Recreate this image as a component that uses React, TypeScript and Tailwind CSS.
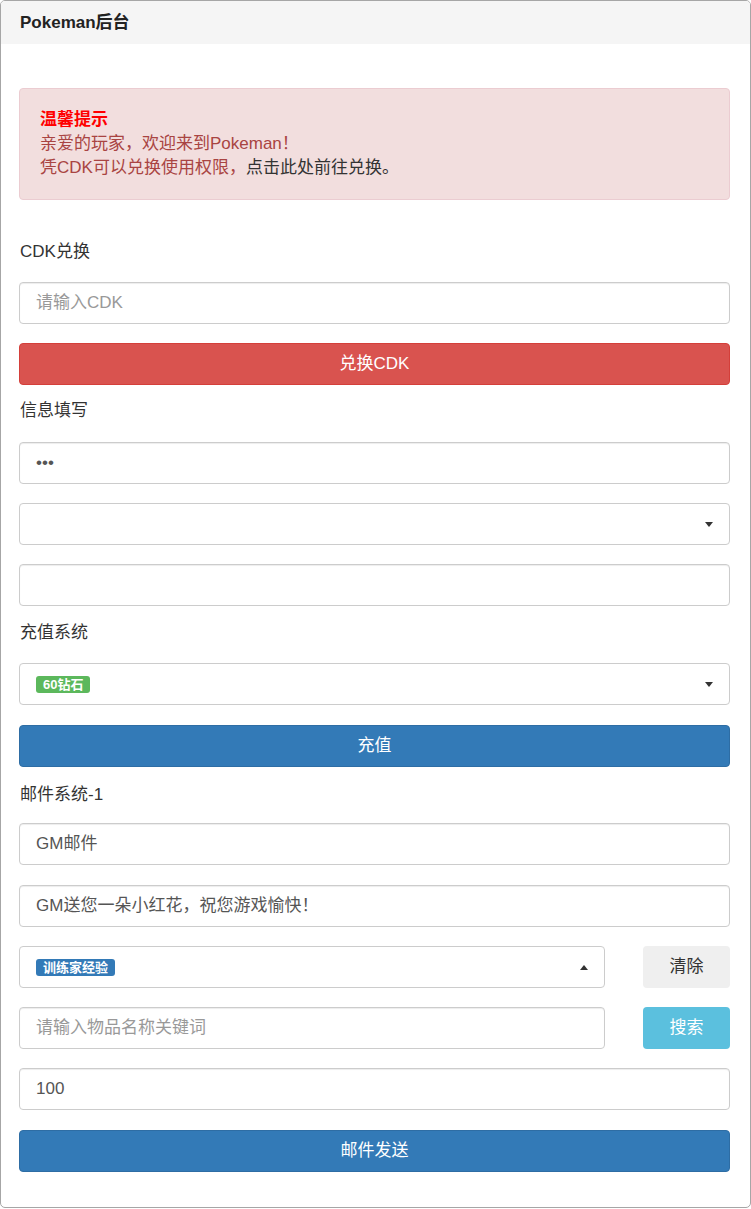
import React from "react";

const font = { fontFamily: '"Liberation Sans", "Noto Sans CJK SC", sans-serif' };

function Caret({ up = false }: { up?: boolean }) {
  return up ? (
    <span className="w-0 h-0 border-l-[4px] border-r-[4px] border-b-[5px] border-l-transparent border-r-transparent border-b-[#333]" />
  ) : (
    <span className="w-0 h-0 border-l-[4px] border-r-[4px] border-t-[5px] border-l-transparent border-r-transparent border-t-[#333]" />
  );
}

function Field({ value, placeholder, className = "" }: { value?: string; placeholder?: string; className?: string }) {
  return (
    <div
      className={`h-[42px] flex items-center px-[16px] border border-[#ccc] rounded-[4px] bg-white shadow-[inset_0_1px_1px_rgba(0,0,0,0.075)] text-[17px] ${className}`}
    >
      {value ? <span className="text-[#555]">{value}</span> : <span className="text-[#999]">{placeholder}</span>}
    </div>
  );
}

function Select({ badge, badgeColor, up = false, className = "" }: { badge?: string; badgeColor?: string; up?: boolean; className?: string }) {
  return (
    <div className={`h-[42px] flex items-center pl-[16px] pr-[16px] border border-[#ccc] rounded-[4px] bg-white ${className}`}>
      <div className="flex-1">
        {badge && (
          <span className={`inline-block text-white font-bold text-[13px] leading-[17px] px-[7px] rounded-[3px] ${badgeColor}`}>
            {badge}
          </span>
        )}
      </div>
      <Caret up={up} />
    </div>
  );
}

function Btn({ label, className }: { label: string; className: string }) {
  return (
    <div className={`h-[42px] flex items-center justify-center rounded-[4px] border text-[17px] text-white ${className}`}>
      {label}
    </div>
  );
}

function Label({ text, className = "" }: { text: string; className?: string }) {
  return <div className={`h-[24px] leading-[24px] text-[17px] text-[#333] ${className}`}>{text}</div>;
}

export default function App() {
  return (
    <div style={font} className="w-[751px] h-[1209px] bg-white">
      <div className="h-[1208px] border border-[#a6a6a6] rounded-[5px] overflow-hidden">
        <div className="h-[43px] bg-[#f5f5f5] flex items-center px-[19px]">
          <span className="text-[17px] font-bold text-[#222]">Pokeman后台</span>
        </div>

        <div className="pl-[18px] pr-[20px]">
          <div className="mt-[44px] bg-[#f2dede] border border-[#ebccd1] rounded-[4px] px-[20px] py-[19px] text-[17px] leading-[24px] text-[#a94442]">
            <div className="font-bold text-[#ff0000]">温馨提示</div>
            <div>亲爱的玩家，欢迎来到Pokeman！</div>
            <div>
              凭CDK可以兑换使用权限，<span className="text-[#333]">点击此处前往兑换。</span>
            </div>
          </div>

          <Label text="CDK兑换" className="mt-[40px] mb-[18px] pl-[1px]" />
          <Field placeholder="请输入CDK" />
          <Btn label="兑换CDK" className="mt-[19px] bg-[#d9534f] border-[#d43f3a]" />

          <Label text="信息填写" className="mt-[14px] mb-[19px] pl-[1px]" />
          <Field value="•••" />
          <Select className="mt-[19px]" />
          <Field className="mt-[19px]" />

          <Label text="充值系统" className="mt-[15px] mb-[18px] pl-[1px]" />
          <Select badge="60钻石" badgeColor="bg-[#5cb85c]" />
          <Btn label="充值" className="mt-[20px] bg-[#337ab7] border-[#2e6da4]" />

          <Label text="邮件系统-1" className="mt-[16px] mb-[16px] pl-[1px]" />
          <Field value="GM邮件" />
          <Field value="GM送您一朵小红花，祝您游戏愉快！" className="mt-[20px]" />

          <div className="mt-[19px] flex items-center">
            <Select badge="训练家经验" badgeColor="bg-[#337ab7]" up className="w-[586px]" />
            <div className="ml-auto w-[87px] h-[42px] flex items-center justify-center rounded-[4px] bg-[#efefef] text-[17px] text-[#333]">
              清除
            </div>
          </div>
          <div className="mt-[19px] flex items-center">
            <Field placeholder="请输入物品名称关键词" className="w-[586px]" />
            <div className="ml-auto w-[87px] h-[42px] flex items-center justify-center rounded-[4px] bg-[#5bc0de] text-[17px] text-white">
              搜索
            </div>
          </div>
          <Field value="100" className="mt-[19px]" />
          <Btn label="邮件发送" className="mt-[20px] bg-[#337ab7] border-[#2e6da4]" />
        </div>
      </div>
    </div>
  );
}
